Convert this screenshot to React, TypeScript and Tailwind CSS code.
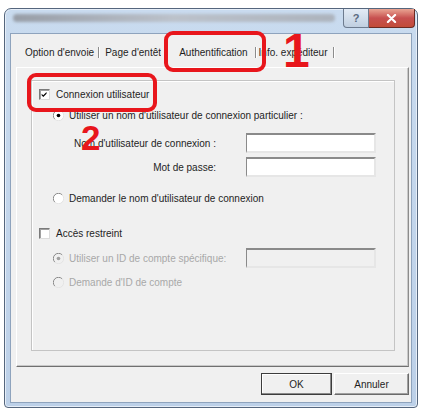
import React from "react";

const font = { fontFamily: '"Liberation Sans", Arial, sans-serif' };

function Check({ checked }: { checked?: boolean }) {
  return (
    <span className="relative w-[11px] h-[11px] shrink-0 bg-white border border-[#7a7a7a] border-r-[#dcdcdc] border-b-[#dcdcdc] shadow-[inset_1px_1px_0_#a0a0a0]">
      {checked && (
        <svg viewBox="0 0 11 11" className="absolute inset-0 w-[9px] h-[9px]">
          <path d="M2 4.5 L4 6.5 L8 2.5 L8 4.5 L4 8.5 L2 6.5 Z" fill="#000" />
        </svg>
      )}
    </span>
  );
}

function Radio({ checked, disabled }: { checked?: boolean; disabled?: boolean }) {
  return (
    <svg viewBox="0 0 12 12" className="w-[11px] h-[11px] shrink-0">
      <circle cx="6" cy="6" r="5.5" fill={disabled ? "#f0f0f0" : "#fff"} />
      <path d="M10 2 A5.5 5.5 0 0 0 2 10" stroke="#808080" strokeWidth="1" fill="none" />
      <path d="M2 10 A5.5 5.5 0 0 0 10 2" stroke="#e3e3e3" strokeWidth="1" fill="none" />
      {checked && <circle cx="6" cy="6" r="2" fill={disabled ? "#a0a0a0" : "#000"} />}
    </svg>
  );
}

function Field({ disabled }: { disabled?: boolean }) {
  return (
    <div
      className={`w-[130px] h-[20px] border-2 border-[#8a8a8a] border-r-[#e6e6e6] border-b-[#e6e6e6] border-l-[1.5px] ${
        disabled ? "bg-[#f0f0f0]" : "bg-white"
      }`}
    />
  );
}

function Sep() {
  return <span className="mt-[-1px] h-[15px] w-[2px] shrink-0 border-l border-[#8c8c8c] border-r border-r-white" />;
}

export default function App() {
  return (
    <div className="relative w-[423px] h-[412px] bg-white overflow-hidden text-[10px] text-[#1e1e1e]" style={font}>
      <div className="ml-[4px] mt-[8px] w-[414px] h-[400px] rounded-t-[7px] rounded-b-[4px] border border-[#55667d] bg-gradient-to-b from-[#c9dbef] to-[#bcd0e8] flex flex-col shadow-[inset_0_0_0_1px_#e6eef8]">
        {/* title bar */}
        <div className="h-[24px] flex items-start shrink-0">
          <div className="ml-[8px] mt-[5px] w-[322px] h-[8px] rounded-full bg-gradient-to-r from-[#8c8f96] via-[#b9bcc2] to-[#a6aab1] blur-[1.5px] opacity-80" />
          <div className="flex-1" />
          <div className="flex mr-[2px]">
            <div className="w-[26px] h-[19px] rounded-bl-[4px] border border-t-0 border-[#6d7b8e] bg-gradient-to-b from-[#e3ebf5] to-[#c0cfe0] flex items-center justify-center text-[11px] text-[#5a6a80] font-bold">
              ?
            </div>
            <div className="w-[46px] h-[19px] rounded-br-[4px] border border-t-0 border-l-0 border-[#6b2a22] bg-gradient-to-b from-[#e8a493] via-[#c75050] to-[#c24b38] flex items-center justify-center">
              <svg viewBox="0 0 12 10" className="w-[11px] h-[9px]">
                <path d="M2 1 L10 9 M10 1 L2 9" stroke="#fff" strokeWidth="2.4" strokeLinecap="round" />
              </svg>
            </div>
          </div>
        </div>

        {/* client area */}
        <div className="mx-[5px] mb-[4px] flex-1 bg-[#f0f0f0] border border-[#8ea3bd] flex flex-col pl-[5px] pr-[2px] pt-[10px] pb-[7px]">
          {/* tabs */}
          <div className="h-[23px] flex items-start pt-[3px] pl-[9px] shrink-0 leading-[12px] whitespace-nowrap">
            <span>Option d'envoie</span>
            <span className="ml-[4px]"><Sep /></span>
            <span className="ml-[5px] w-[56px] overflow-hidden">Page d'entête</span>
            <span className="ml-[18px]">Authentification</span>
            <span className="ml-[7px]"><Sep /></span>
            <span className="ml-[2px]">Info. expéditeur</span>
            <span className="ml-[5px]"><Sep /></span>
          </div>

          {/* tab panel */}
          <div className="flex-1 flex flex-col border border-white border-r-[#8c8c8c] border-b-[#707070] shadow-[inset_-1px_-1px_0_#c8c8c8] pt-[12px] pl-[14px] pr-[13px] pb-[15px]">
            <div className="flex-1 border border-[#c4c4c4] shadow-[inset_1px_1px_0_#fff] flex flex-col pl-[7px] pt-[7px]">
              <label className="flex items-center h-[12px] gap-[6px]">
                <Check checked />
                <span>Connexion utilisateur</span>
              </label>

              <div className="flex items-center h-[12px] mt-[9px] ml-[14px] gap-[5px]">
                <Radio checked />
                <span>Utiliser un nom d'utilisateur de connexion particulier :</span>
              </div>

              <div className="flex items-center mt-[12px] ml-[-7px]">
                <span className="w-[184px] text-right">Nom d'utilisateur de connexion :</span>
                <span className="ml-[30px]"><Field /></span>
              </div>
              <div className="flex items-center mt-[4px] ml-[-7px]">
                <span className="w-[184px] text-right">Mot de passe:</span>
                <span className="ml-[30px]"><Field /></span>
              </div>

              <div className="flex items-center h-[12px] mt-[15px] ml-[14px] gap-[5px]">
                <Radio />
                <span>Demander le nom d'utilisateur de connexion</span>
              </div>

              <label className="flex items-center h-[12px] mt-[23px] gap-[6px]">
                <Check />
                <span>Accès restreint</span>
              </label>

              <div className="flex items-center mt-[9px] ml-[14px] text-[#a8a8a8]">
                <span className="w-[193px] flex items-center gap-[5px]">
                  <Radio checked disabled />
                  <span>Utiliser un ID de compte spécifique:</span>
                </span>
                <Field disabled />
              </div>

              <div className="flex items-center h-[12px] mt-[8px] ml-[14px] gap-[5px] text-[#a8a8a8]">
                <Radio disabled />
                <span>Demande d'ID de compte</span>
              </div>
            </div>
          </div>

          {/* buttons */}
          <div className="flex justify-end mt-[6px] gap-[2px] shrink-0">
            <button className="w-[71px] h-[22px] border border-[#3c3c3c] bg-[#f0f0f0] shadow-[inset_-1px_-1px_0_#8a8a8a,inset_1px_1px_0_#fff] text-[10px]">
              OK
            </button>
            <button className="w-[75px] h-[22px] border border-[#fff] border-r-[#6a6a6a] border-b-[#6a6a6a] bg-[#f0f0f0] shadow-[inset_-1px_-1px_0_#a0a0a0] text-[10px]">
              Annuler
            </button>
          </div>
        </div>
      </div>

      {/* annotations */}
      <div className="absolute left-[164px] top-[31px] w-[102px] h-[41px] border-[4px] border-[#e8161c] rounded-[9px]" />
      <div className="absolute left-[283px] top-[34px] text-[48px] leading-[34px] font-bold text-[#e8161c]">1</div>
      <div className="absolute left-[27px] top-[73px] w-[130px] h-[39px] border-[4px] border-[#e8161c] rounded-[9px]" />
      <div className="absolute left-[81px] top-[125px] text-[35px] leading-[25px] font-bold text-[#e8161c]">2</div>
    </div>
  );
}
